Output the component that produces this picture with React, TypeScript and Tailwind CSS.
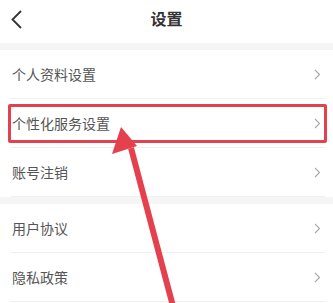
const groups = [
  ["个人资料设置", "个性化服务设置", "账号注销"],
  ["用户协议", "隐私政策"],
];

function Row({ label }: { label: string }) {
  return (
    <div className="pl-[10px] pr-[8px]">
      <div className="flex h-[49px] items-center pl-[2px] pr-[4px] border-b border-[#f0f0f0]">
        <span className="flex-1 text-[14px] text-[#555]">{label}</span>
        <svg width="7" height="11" viewBox="0 0 7 11" fill="none">
          <path d="M1 1l4.5 4.5L1 10" stroke="#a8a8a8" strokeWidth="1.1" />
        </svg>
      </div>
    </div>
  );
}

export default function App() {
  return (
    <div
      className="relative w-[333px] h-[303px] overflow-hidden bg-white"
      style={{ fontFamily: '"Noto Sans CJK SC", "Noto Sans", sans-serif' }}
    >
      {/* Header */}
      <div className="flex h-[43px] items-start pt-[9px] px-[11px]">
        <svg width="12" height="19" viewBox="0 0 12 19" fill="none" className="mt-[1px]">
          <path d="M10 1L1.5 9.5 10 18" stroke="#333" strokeWidth="1.8" />
        </svg>
        <span className="flex-1 text-center text-[16px] font-bold text-[#333] leading-[20px] mt-[-1px]">设置</span>
        <div className="w-[12px]" />
      </div>

      {groups.map((items, gi) => (
        <div key={gi}>
          <div className="h-[7px] bg-[#f5f5f6]" />
          {items.map((label) => (
            <Row key={label} label={label} />
          ))}
        </div>
      ))}

      {/* Annotation overlay */}
      <div className="absolute left-[8px] top-[104px] w-[319px] h-[39px] border-[3px] border-[#e5404e] rounded-[2px]" />
      <svg className="absolute left-0 top-0 pointer-events-none" width="333" height="303">
        <line x1="131" y1="148" x2="174" y2="310" stroke="#e5404e" strokeWidth="6" />
        <polygon points="121,127 112,154 137,146" fill="#e5404e" />
      </svg>
    </div>
  );
}
